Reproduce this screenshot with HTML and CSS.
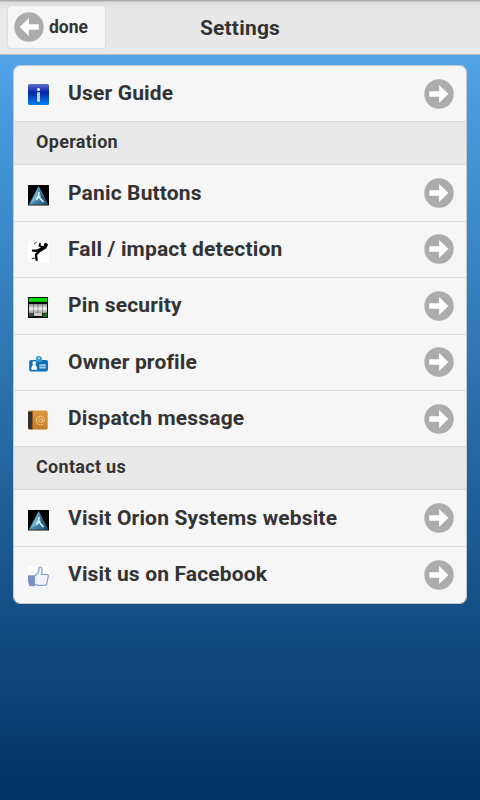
FILE: index.html
```html
<!DOCTYPE html>
<html lang="en">
<head>
<meta charset="UTF-8">
<meta name="viewport" content="width=device-width, initial-scale=1.0">
<title>Settings</title>
<link rel="stylesheet" href="styles.css">
</head>
<body>
  <!-- shared icons -->
  <svg class="defs" width="0" height="0">
    <defs>
      <linearGradient id="blue" x1="0" y1="0" x2="0" y2="1">
        <stop offset="0" stop-color="#5870cc"/>
        <stop offset=".25" stop-color="#2640b4"/>
        <stop offset=".4" stop-color="#0428a4"/>
        <stop offset="1" stop-color="#0080f0"/>
      </linearGradient>
      <linearGradient id="ice" x1="0" y1="0" x2="1" y2="1">
        <stop offset="0" stop-color="#5aa4c8"/>
        <stop offset=".5" stop-color="#4c94b8"/>
        <stop offset="1" stop-color="#1c4c68"/>
      </linearGradient>
      <linearGradient id="steel" x1="0" y1="0" x2="0" y2="1">
        <stop offset="0" stop-color="#8c8c8c"/>
        <stop offset=".5" stop-color="#eee"/>
        <stop offset="1" stop-color="#999"/>
      </linearGradient>
      <linearGradient id="leather" x1="0" y1="0" x2="0" y2="1">
        <stop offset="0" stop-color="#dc9840"/>
        <stop offset="1" stop-color="#c47c20"/>
      </linearGradient>
    </defs>
    <symbol id="arrow" viewBox="0 0 30 30">
      <circle cx="15" cy="15" r="14.7" fill="#acacac"/>
      <path d="M5.3 12.2h9.8V6l9.3 9-9.3 9v-6.2H5.3z" fill="#fff"/>
    </symbol>
    <symbol id="orion" viewBox="0 0 21 21">
      <path d="M0 0h21v21H0z" fill="#000"/>
      <path d="M10.6 1 20.3 19.8H.8z" fill="url(#ice)"/>
      <path d="M10 4 2.5 18.5l5-3z" fill="#a4d0e4" opacity=".5"/>
      <path d="M12 5l6 12-5-4z" fill="#1c4058" opacity=".6"/>
      <path d="M11 7l-.6 4.5 2.4 2.5M10.4 11.5 8.4 15M8.4 12.8l4-1.6M12.8 14l2.6 3" fill="none" stroke="#dcf0f8" stroke-width="1.6"/>
      <path d="M0 20h21v1H0z" fill="#8a8078"/>
    </symbol>
  </svg>

  <div class="header">
    <a class="back" href="#"><svg class="arrow left"><use href="#arrow"/></svg>done</a>
    <h1>Settings</h1>
  </div>

  <ul class="list">
    <li class="row">
      <svg class="icon" viewBox="0 0 21 21">
        <rect width="21" height="21" rx="1.5" fill="url(#blue)"/>
        <circle cx="10.5" cy="5.5" r="1.6" fill="#f4f4f4"/>
        <path d="M9 8.3h3v9.4H9z" fill="#ccd0d4"/>
      </svg>
      <span class="name">User Guide</span>
      <svg class="arrow"><use href="#arrow"/></svg>
    </li>
    <li class="divider">Operation</li>
    <li class="row">
      <svg class="icon"><use href="#orion"/></svg>
      <span class="name">Panic Buttons</span>
      <svg class="arrow"><use href="#arrow"/></svg>
    </li>
    <li class="row">
      <svg class="icon" viewBox="0 0 21 21">
        <path d="M0 0h21v21H0z" fill="#fff"/>
        <g fill="none" stroke="#000" stroke-linecap="round" stroke-linejoin="round">
          <path d="M15.3 6.8 10.5 10" stroke-width="3.8"/>
          <path d="M14.5 6l-3-1.2.5-2.2M17.5 7l1-3.5" stroke-width="1.8"/>
          <path d="M10.5 9.8 5 9.6M10.5 11.2 8 13.5l.5 5" stroke-width="2.4"/>
          <path d="M6.5 2.8 8.3 1.3M4.2 17.3h2.3M8.3 19.3h1" stroke-width=".9"/>
        </g>
        <circle cx="17.8" cy="4" r="2"/>
      </svg>
      <span class="name">Fall / impact detection</span>
      <svg class="arrow"><use href="#arrow"/></svg>
    </li>
    <li class="row">
      <svg class="icon" viewBox="0 0 21 21">
        <path d="M0 0h20v21H0z" fill="#0a0a0a"/>
        <path d="M1 1h18v3.8H1z" fill="#0cdc0c"/>
        <path d="M1 7h18v9H1z" fill="url(#steel)"/>
        <path d="M6 16h8v3H6z" fill="#ccc"/>
        <path d="M1 16h4.5v3.5H1z" fill="#484848"/>
        <path d="M14.8 16.5H19v3.3h-4.2z" fill="#087c10"/>
        <path d="M5.5 7v12M10 7v9M14.5 7v12" stroke="#333" stroke-width=".6" opacity=".6"/>
      </svg>
      <span class="name">Pin security</span>
      <svg class="arrow"><use href="#arrow"/></svg>
    </li>
    <li class="row">
      <svg class="icon" viewBox="0 0 21 21">
        <rect x="1.2" y="6" width="18.8" height="11.5" rx="2" fill="#1470b4"/>
        <path d="M8 8V4.3Q8 2 10.7 2T14 4.3V8z" fill="#3c98d0"/>
        <circle cx="11" cy="4.2" r="1" fill="#b4dcf0"/>
        <circle cx="6.2" cy="9" r="1.9" fill="#fff"/>
        <path d="M3.3 15.8Q3.5 10.8 6.2 10.8t3 5z" fill="#fff"/>
        <path d="M11.3 10.3h6.5v4.2h-6.5z" fill="#a4d0ec"/>
        <path d="M11.3 12.4h6.5" stroke="#3c88c0" stroke-width=".8"/>
      </svg>
      <span class="name">Owner profile</span>
      <svg class="arrow"><use href="#arrow"/></svg>
    </li>
    <li class="row">
      <svg class="icon" viewBox="0 0 21 21">
        <rect x=".2" y=".5" width="19.5" height="19" rx="1.5" fill="url(#leather)"/>
        <path d="M0 1.5h4.5v17.8H1L0 18z" fill="#34302c"/>
        <path d="M4 1.5h1v17.8H4z" fill="#905c20"/>
        <g fill="none" stroke="#f0cc94" stroke-width=".9">
          <circle cx="12.5" cy="10.5" r="1.8"/>
          <path d="M14.4 8.7v2.6q.3 1.2 1.5.5.8-1 .7-2.6-1-3-4.2-3.1-4 .3-4.3 4.4.4 4 4.4 4.4 1.7 0 3-.9"/>
        </g>
      </svg>
      <span class="name">Dispatch message</span>
      <svg class="arrow"><use href="#arrow"/></svg>
    </li>
    <li class="divider">Contact us</li>
    <li class="row">
      <svg class="icon"><use href="#orion"/></svg>
      <span class="name">Visit Orion Systems website</span>
      <svg class="arrow"><use href="#arrow"/></svg>
    </li>
    <li class="row">
      <svg class="icon" viewBox="0 0 21 21">
        <path d="M0 0h21v21H0z" fill="#fff"/>
        <path d="M6.5 10.2Q10.3 7.5 11 4.5V1.2q2.8-1 3.1 2.5 0 2.5-.7 4.6H19q1.8.4 1.3 2.2L18.7 18q-.3 1.3-2 1.4H9.5l-3-1z" fill="#f0f4fa" stroke="#88a0cc" stroke-width="1.2"/>
        <path d="M0 9.3h6.8v11H1.3L0 15z" fill="#7890c4"/>
      </svg>
      <span class="name">Visit us on Facebook</span>
      <svg class="arrow"><use href="#arrow"/></svg>
    </li>
  </ul>
</body>
</html>
```
FILE: styles.css
```css
* {
  box-sizing: border-box;
}
body {
  font-family: Roboto, "Liberation Sans", sans-serif;
  font-weight: bold;
  font-variant-ligatures: none;
  margin: 0;
  min-height: 800px;
  color: #333;
  background: linear-gradient(to bottom, #52a4e8 54px, #4596d8 140px, #003264 800px);
  text-shadow: 0 1px 0 #f3f3f3;
}
.defs {
  display: block;
}
.header {
  display: grid;
  grid-template-columns: 99px 1fr 99px;
  align-items: center;
  height: 55px;
  padding: 0 7px;
  background: linear-gradient(to bottom, #a0a0a0 0, #b0b0b0 1px, #dcdcdc 2px, #e8e8e8 9px);
  border-bottom: 1px solid #bbb;
}
.back {
  display: flex;
  align-items: center;
  gap: 5px;
  height: 44px;
  padding: 0 0 1px 6px;
  border: 1px solid #ddd;
  border-radius: 4px;
  background: #f6f6f6;
  color: #333;
  font-size: 17.5px;
  text-decoration: none;
}
h1 {
  margin: 1px 0 0;
  text-align: center;
  font-size: 21px;
  letter-spacing: 0.2px;
}
.list {
  margin: 10px 13px 0;
  padding: 0;
  list-style: none;
  border: 1px solid #c8c8c8;
  border-radius: 7px;
  overflow: hidden;
}
.row {
  display: flex;
  align-items: center;
  height: 56.4px;
  padding: 0 12.5px 0 14px;
  background: #f6f6f6;
  border-bottom: 1px solid #d9d9d9;
}
.row:last-child {
  border-bottom: none;
}
.divider {
  display: flex;
  align-items: center;
  height: 43px;
  padding: 0 22px 3px;
  background: #e9e9e9;
  border-bottom: 1px solid #d9d9d9;
  font-size: 18px;
  letter-spacing: 0.3px;
}
.icon {
  width: 21px;
  height: 21px;
  margin: 4px 19px 0 0;
}
.row:first-child .icon {
  margin-top: 2px;
}
.name {
  flex: 1;
  padding-bottom: 1px;
  font-size: 21px;
  letter-spacing: 0.16px;
}
.arrow {
  width: 30px;
  height: 30px;
}
.left {
  transform: scaleX(-1);
}
```
